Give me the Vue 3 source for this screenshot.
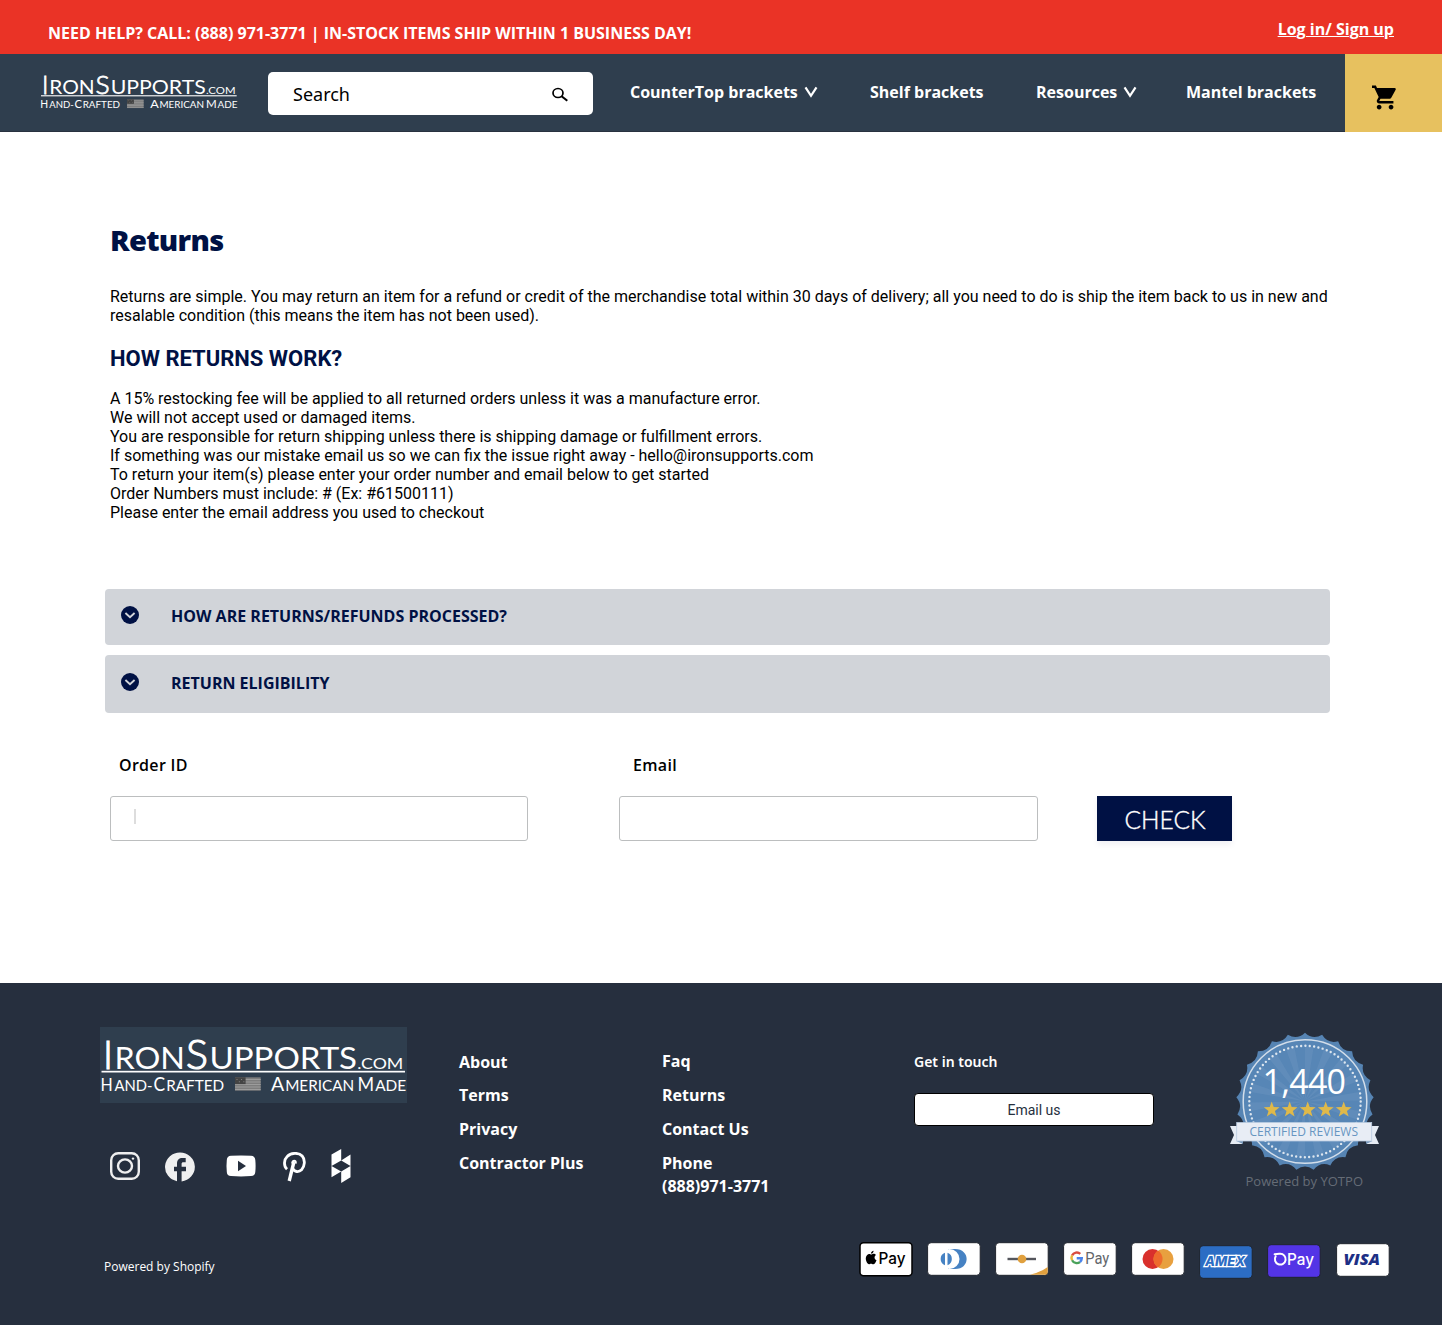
<script setup>
import { h } from 'vue'

const navItems = [
  { label: 'CounterTop brackets', menu: true },
  { label: 'Shelf brackets', menu: false },
  { label: 'Resources', menu: true },
  { label: 'Mantel brackets', menu: false },
]

const steps = [
  'A 15% restocking fee will be applied to all returned orders unless it was a manufacture error.',
  'We will not accept used or damaged items.',
  'You are responsible for return shipping unless there is shipping damage or fulfillment errors.',
  'If something was our mistake email us so we can fix the issue right away - hello@ironsupports.com',
  'To return your item(s) please enter your order number and email below to get started',
  'Order Numbers must include: # (Ex: #61500111)',
  'Please enter the email address you used to checkout',
]

// Wordmark pieces: text, x, baseline, font size, width, weight
const wordmark = [
  ['I', 2.9, 42.3, 40, 10, 300],
  ['RON', 14.4, 42.3, 30.5, 70.5, 400],
  ['S', 86, 42.3, 41, 22, 300],
  ['UPPORTS', 109.5, 42.3, 30.5, 147.5, 400],
  ['.COM', 257.3, 42.3, 16, 46, 400],
  ['H', 0.4, 64, 18, 12.2, 400],
  ['AND-', 14.4, 64, 14.6, 38, 400],
  ['C', 53.6, 64, 18.5, 11.6, 400],
  ['RAFTED', 66.2, 64, 14.6, 58, 400],
  ['A', 171, 64, 18.5, 13.2, 400],
  ['MERICAN', 185.2, 64, 14.6, 69, 400],
  ['M', 257.5, 64, 18.5, 16.6, 400],
  ['ADE', 275.2, 64, 14.6, 31, 400],
]

const Wordmark = () =>
  h('svg', { viewBox: '0 0 307 76', fill: '#fff', 'font-family': 'Lato, sans-serif' }, [
    ...wordmark.map(([t, x, y, size, textLength, weight]) =>
      h(
        'text',
        {
          x,
          y,
          'font-size': size,
          textLength,
          lengthAdjust: 'spacingAndGlyphs',
          'font-weight': weight,
          ...(weight === 300 ? { stroke: '#fff', 'stroke-width': 1.2 } : {}),
        },
        t
      )
    ),
    h('rect', { x: 1.5, y: 43.8, width: 303.5, height: 1.7 }),
    h('rect', { x: 135, y: 50.3, width: 25.7, height: 13.4, fill: '#7d7d7d' }),
    ...[0, 1, 2, 3, 4].map((i) =>
      h('rect', { x: 135, y: 52 + i * 2.5, width: 25.7, height: 1, fill: '#9c9c9c' })
    ),
    h('rect', { x: 135, y: 50.3, width: 10.6, height: 6.8, fill: '#444' }),
    ...[0, 1, 2, 3].map((i) =>
      h('circle', { cx: 137 + i * 2.3, cy: 52.4 + (i % 2) * 2.4, r: 0.5, fill: '#999' })
    ),
  ])

// Seal outline: 25 points joined by shallow inward arcs
const polar = (r, deg) => {
  const a = ((deg - 90) * Math.PI) / 180
  return `${(80 + r * Math.cos(a)).toFixed(2)} ${(73.5 + r * Math.sin(a)).toFixed(2)}`
}
const points = 25
const stepDeg = 360 / points
let seal = `M${polar(68.8, 0)}`
for (let i = 0; i < points; i++) {
  seal += `Q${polar(61.8, (i + 0.5) * stepDeg)} ${polar(68.8, (i + 1) * stepDeg)}`
}
seal += 'Z'
const rays = Array.from({ length: 18 }, (_, i) => `M80 73.5L${polar(55, i * 20)}L${polar(55, i * 20 + 9)}Z`).join('')
const stars = [46.7, 64.7, 82.7, 100.7, 118.7]
</script>

<template>
  <div class="page">
    <div class="promo">
      <span>NEED HELP? CALL: (888) 971-3771 | IN-STOCK ITEMS SHIP WITHIN 1 BUSINESS DAY!</span>
      <a class="login">Log in/ Sign up</a>
    </div>

    <header class="bar">
      <Wordmark class="logo" />
      <div class="search">
        <span>Search</span>
        <svg width="18" height="16" viewBox="0 0 18 16" fill="none" stroke="#000">
          <ellipse cx="7" cy="6" rx="5" ry="4.5" stroke-width="1.7" />
          <path d="M10.6 9.3L16.3 13.8" stroke-width="2.1" />
        </svg>
      </div>
      <nav class="nav">
        <a v-for="n in navItems" :key="n.label">
          {{ n.label }}
          <svg v-if="n.menu" width="14" height="12" viewBox="0 0 14 12" fill="none" stroke="#fff" stroke-width="2.2">
            <path d="M1.5 1.3L7 9.8L12.5 1.3" />
          </svg>
        </a>
      </nav>
      <div class="cart">
        <svg width="25" height="25" viewBox="1 2 21 20">
          <path d="M7 18c-1.1 0-1.99.9-1.99 2S5.9 22 7 22s2-.9 2-2-.9-2-2-2zM1 2v2h2l3.6 7.59-1.35 2.45c-.16.28-.25.61-.25.96 0 1.1.9 2 2 2h12v-2H7.42c-.14 0-.25-.11-.25-.25l.03-.12.9-1.63h7.45c.75 0 1.41-.41 1.75-1.03l3.58-6.49A1 1 0 0 0 20.01 4H5.21l-.94-2H1zm16 16c-1.1 0-1.99.9-1.99 2s.89 2 1.99 2 2-.9 2-2-.9-2-2-2z" />
        </svg>
      </div>
    </header>

    <main class="content">
      <h1>Returns</h1>
      <p class="intro">
        Returns are simple. You may return an item for a refund or credit of the merchandise total within 30 days of delivery; all you need to do is ship the item back to us in new and<br />resalable condition (this means the item has not been used).
      </p>
      <h2>HOW RETURNS WORK?</h2>
      <p class="steps"><span v-for="s in steps" :key="s">{{ s }}</span></p>

      <section class="accordions">
        <div v-for="(t, i) in ['HOW ARE RETURNS/REFUNDS PROCESSED?', 'RETURN ELIGIBILITY']" :key="t" class="accordion" :class="{ tall: i === 1 }">
          <svg width="18" height="18" viewBox="0 0 18 18">
            <circle cx="9" cy="9" r="9" fill="#001144" />
            <path d="M4.4 7L9 11.2L13.6 7" fill="none" stroke="#d1d4d9" stroke-width="1.9" />
          </svg>
          <span>{{ t }}</span>
        </div>
      </section>

      <form class="lookup" @submit.prevent>
        <label class="order"><span>Order ID</span><div class="field"><i></i></div></label>
        <label class="email"><span>Email</span><div class="field"></div></label>
        <button>CHECK</button>
      </form>
    </main>

    <footer class="footer">
      <div class="top">
        <div class="brand">
          <div class="plate"><Wordmark /></div>
          <div class="social">
            <svg width="30" height="28" viewBox="0 0 30 28" fill="none" stroke="#efefef">
              <rect x="1.2" y="1.2" width="27.6" height="25.6" rx="7" stroke-width="2.4" />
              <ellipse cx="15" cy="14" rx="7" ry="6.6" stroke-width="2.4" />
              <circle cx="23" cy="6.6" r="1.2" fill="#efefef" stroke="none" />
            </svg>
            <svg class="fb" width="30" height="30" viewBox="0 0 30 30">
              <path fill="#efefef" d="M15 .5A15 14.5 0 0 0 12 29.2V19.2H9V14.8H12V12C12 7.8 14 6 17.5 6H20.7V10.2H18.5C17 10.2 16.6 10.8 16.6 12V14.8H21V19.2H16.6V29.4A15 14.5 0 0 0 15 .5Z" />
            </svg>
            <svg class="yt" width="30" height="22" viewBox="0 0 30 22">
              <path fill="#fff" fill-rule="evenodd" d="M5 .8Q15 0 25 .8Q29 1 29.3 5Q29.9 11 29.3 17Q29 20.8 25 21.1Q15 21.7 5 21.1Q1 20.8.8 17Q.2 11 .8 5Q1 1 5 .8ZM12 5.8V16.3L20 11Z" />
            </svg>
            <svg class="pin" width="23" height="30" viewBox="0 0 23 30" fill="none" stroke="#fff">
              <path d="M4 17.2C.5 14 .8 7.7 4.2 4.5C8 .4 16 .4 19.2 4C22.6 7.8 21.6 14.8 18.6 17.8C15.8 20.5 11.3 20 10.1 16.8" stroke-width="2.8" />
              <path d="M10.9 10L6.2 29" stroke-width="3.4" />
              <path d="M9.3 11.5C9.2 7.8 13.4 7.8 12.6 11.5" stroke-width="2.2" />
            </svg>
            <svg class="houzz" width="20" height="34" viewBox="0 0 20 34" fill="#fff">
              <path d="M.5 5.6L10.2 0V11.5L.5 17ZM19.5 5.6V17L10.2 11.5ZM.5 17L10.2 22.6L.5 28.3ZM19.5 17V28.3L10.2 34V22.6Z" />
            </svg>
          </div>
        </div>

        <ul class="links">
          <li>About</li><li>Terms</li><li>Privacy</li><li>Contractor Plus</li>
        </ul>
        <ul class="links second">
          <li>Faq</li><li>Returns</li><li>Contact Us</li><li>Phone</li><li class="tel">(888)971-3771</li>
        </ul>

        <div class="touch">
          <h3>Get in touch</h3>
          <button>Email us</button>
        </div>

        <svg class="seal" width="160" height="168" viewBox="0 0 160 168">
          <path :d="seal" fill="#5684b3" />
          <circle cx="80" cy="73.5" r="61.8" fill="#5786b6" stroke="#d3deea" stroke-width="1.5" />
          <path :d="rays" fill="#6d97c0" opacity=".4" />
          <circle cx="80" cy="73.5" r="55.7" fill="none" stroke="#dde6ef" stroke-width="2.4" stroke-linecap="round" stroke-dasharray="0 4.375" />
          <text x="37.5" y="66" font-size="34" fill="#fff" textLength="83.5">1,440</text>
          <path v-for="x in stars" :key="x" :transform="`translate(${x} 81.8)`" fill="#dfb94a" d="M0-8.3L2-2.7L7.9-2.5L3.2 1.1L4.9 6.8L0 3.5L-4.9 6.8L-3.2 1.1L-7.9-2.5L-2-2.7Z" />
          <path d="M5 98H17V116H5L9 107ZM154 98H142V116H154L150 107Z" fill="#e6ecf4" />
          <path d="M11.5 113L18 116V113ZM147.5 113L141 116V113Z" fill="#7898ba" />
          <rect x="11.7" y="94.5" width="135" height="18.5" fill="#e8edf5" stroke="#b9cbe0" stroke-width=".8" />
          <text x="24.5" y="107.8" font-size="12.5" fill="#6795c1" textLength="108.5" lengthAdjust="spacingAndGlyphs">CERTIFIED REVIEWS</text>
          <text x="20.5" y="158" font-size="13" fill="#656c76" textLength="117.5">Powered by YOTPO</text>
        </svg>
      </div>

      <div class="bottom">
        <span>Powered by Shopify</span>
        <div class="cards">
          <svg class="apple" viewBox="0 0 54 35">
            <rect x="1" y=".8" width="52" height="33" rx="3.5" fill="#fff" stroke="#000" stroke-width="1.5" />
            <path d="M12.6 12.4C14 11.4 16 11.6 17 13C14.9 14.3 15.2 17.2 17.5 18.2C17 20 15.5 22.3 14.2 22.2C13.2 22.1 12.9 21.7 12 21.7S10.7 22.2 10 22.2C8.3 22.2 6.6 18.6 6.8 16C7 13 9.5 11.2 11.4 12.2C12 12.5 12.1 12.6 12.6 12.4ZM11.9 11.6C11.9 10 13.3 8.8 14.6 8.7C14.7 10.3 13.5 11.7 11.9 11.6Z" />
            <text x="19.5" y="22.2" font-size="16" font-weight="500" font-family="Inter, sans-serif" textLength="27" lengthAdjust="spacingAndGlyphs">Pay</text>
          </svg>
          <svg viewBox="0 0 54 34">
            <rect class="card" x=".6" y=".7" width="52.6" height="32.6" rx="3.5" />
            <path fill="#4682c3" d="M21 7H28C43.5 7 43.5 27 28 27H21Z" />
            <circle cx="22.5" cy="17" r="10" fill="#fff" />
            <path fill="#4682c3" d="M18 10.8A6.6 6.6 0 0 0 18 23.2ZM20.5 10.8A6.6 6.6 0 0 1 20.5 23.2Z" />
          </svg>
          <svg viewBox="0 0 54 34">
            <rect class="card" x=".6" y=".7" width="52.6" height="32.6" rx="3.5" />
            <rect x="12.5" y="15.8" width="28.5" height="2.4" fill="#54565c" />
            <circle cx="27" cy="17" r="4.3" fill="#e0a03e" />
            <path d="M35 32.7Q46 30 52.7 25V30Q52.7 32.7 50 32.7Z" fill="#e0a03e" />
          </svg>
          <svg viewBox="0 0 54 34">
            <rect class="card" x=".6" y=".7" width="52.6" height="32.6" rx="3.5" />
            <g fill="none" stroke-width="2.4">
              <path d="M17.3 11.8A5.3 5.3 0 0 0 9.1 13.4" stroke="#d94b3f" />
              <path d="M9.1 13.4A5.3 5.3 0 0 0 9.1 18.2" stroke="#e9b83b" />
              <path d="M9.1 18.2A5.3 5.3 0 0 0 17 20" stroke="#4aa25a" />
              <path d="M17 20A5.3 5.3 0 0 0 18.8 16.2H13.7" stroke="#4a83eb" />
            </g>
            <text x="22.3" y="21.7" font-size="16" fill="#63666b" font-family="Roboto, sans-serif" textLength="24" lengthAdjust="spacingAndGlyphs">Pay</text>
          </svg>
          <svg viewBox="0 0 54 34">
            <rect class="card" x=".6" y=".7" width="52.6" height="32.6" rx="3.5" />
            <circle cx="21.5" cy="17" r="10" fill="#d9302c" />
            <circle cx="32.5" cy="17" r="10" fill="#e8a03f" />
            <path d="M27 8.6A10 10 0 0 1 27 25.4A10 10 0 0 1 27 8.6Z" fill="#ee6a2c" />
          </svg>
          <svg class="down3" viewBox="0 0 54 34">
            <rect class="card amex" x=".6" y=".7" width="52.6" height="32.6" rx="3.5" />
            <text x="6" y="20.9" font-size="12.5" font-style="italic" font-weight="800" fill="#2c6dc4" stroke="#fff" stroke-width="2.4" paint-order="stroke" font-family="Inter, sans-serif" textLength="40" lengthAdjust="spacingAndGlyphs">AMEX</text>
          </svg>
          <svg class="down2" viewBox="0 0 54 34">
            <rect class="card shop" x=".6" y=".7" width="52.6" height="32.6" rx="3.5" />
            <path d="M8.7 12.3A5.4 5.4 0 1 0 13 9.8Q10.4 9.7 7.6 10.3" fill="none" stroke="#fff" stroke-width="2" stroke-linecap="round" />
            <text x="20" y="20.7" font-size="16" fill="#fff" font-weight="500" font-family="Inter, sans-serif" textLength="27" lengthAdjust="spacingAndGlyphs">Pay</text>
          </svg>
          <svg class="down1" viewBox="0 0 54 34">
            <rect class="card" x=".6" y=".7" width="52.6" height="32.6" rx="3.5" />
            <text x="7.5" y="22" font-size="15.5" font-style="italic" font-weight="800" fill="#1d2f85" font-family="'Open Sans', sans-serif" textLength="36.5" lengthAdjust="spacingAndGlyphs">VISA</text>
          </svg>
        </div>
      </div>
    </footer>
  </div>
</template>

<style>
body {
  margin: 0;
}
</style>

<style scoped>
.page {
  width: 1442px;
  height: 1325px;
  overflow: hidden;
  display: flex;
  flex-direction: column;
  background: #fff;
  color: #000;
  font-family: 'Open Sans', sans-serif;
}
svg {
  display: block;
  flex: none;
}
.promo {
  height: 54px;
  box-sizing: border-box;
  padding: 18px 48px 0;
  display: flex;
  justify-content: space-between;
  align-items: flex-start;
  background: #ea3326;
  color: #fff;
  font-size: 16px;
  font-weight: 700;
  line-height: 22px;
  white-space: nowrap;
}
.promo span {
  padding-top: 4px;
}
.login {
  text-decoration: underline;
  text-decoration-thickness: 1px;
}
.bar {
  height: 78px;
  display: flex;
  background: #2f3e4e;
  box-shadow: inset 0 -1px #28313f;
}
.logo {
  width: 198px;
  height: 49px;
  margin: 13px 30px 0 40px;
}
.search {
  width: 325px;
  height: 43px;
  margin-top: 18px;
  box-sizing: border-box;
  padding: 0 24px 0 25px;
  display: flex;
  align-items: center;
  justify-content: space-between;
  background: #fff;
  border-radius: 5px;
  font-family: 'Noto Sans', sans-serif;
  font-size: 18px;
}
.search svg {
  margin-top: 2px;
}
.nav {
  margin-left: 37px;
  display: grid;
  grid-template-columns: 240px 166px 150px 159px;
  height: 76px;
  color: #fff;
  font-size: 16px;
  font-weight: 700;
  white-space: nowrap;
}
.nav a {
  display: flex;
  align-items: center;
  gap: 6px;
}
.cart {
  width: 97px;
  display: flex;
  align-items: center;
  justify-content: center;
  background: #e7c15f;
}
.cart svg {
  margin: 9px 18px 0 0;
}
.content {
  height: 851px;
  box-sizing: border-box;
  padding: 89px 105px 0;
}
h1 {
  margin: 0 0 0 5px;
  font-size: 29px;
  line-height: 38px;
  font-weight: 800;
  letter-spacing: -0.7px;
  color: #001144;
}
.intro,
.steps {
  margin: 28px 0 0 5px;
  font: 16px/19px Roboto, sans-serif;
  white-space: nowrap;
}
h2 {
  margin: 20px 0 0 5px;
  font: 700 22px/28px Roboto, sans-serif;
  color: #001144;
}
.steps {
  margin-top: 16px;
  display: flex;
  flex-direction: column;
}
.accordions {
  margin-top: 67px;
  width: 1225px;
  display: flex;
  flex-direction: column;
  gap: 10px;
}
.accordion {
  height: 56px;
  box-sizing: border-box;
  padding: 0 16px 2px;
  display: flex;
  align-items: center;
  gap: 32px;
  background: #d1d4d9;
  border-radius: 4px;
  color: #001144;
  font-size: 16px;
  font-weight: 700;
}
.accordion svg {
  margin-top: -2px;
}
.tall {
  height: 58px;
}
.lookup {
  margin: 40px 0 0 5px;
  display: flex;
  align-items: flex-end;
}
.lookup label {
  width: 418px;
  font-size: 16px;
  font-weight: 600;
  letter-spacing: 0.3px;
}
.lookup label > span {
  display: block;
  margin-left: 9px;
  height: 43px;
  line-height: 24px;
}
.lookup .email {
  width: 419px;
  margin: 0 59px 0 91px;
}
.lookup .email > span {
  margin-left: 14px;
}
.field {
  height: 45px;
  box-sizing: border-box;
  border: 1px solid #bcbebf;
  border-radius: 3px;
  padding: 12px 23px;
}
.field i {
  display: block;
  width: 2px;
  height: 15px;
  background: #ddd;
}
.lookup button {
  width: 135px;
  height: 45px;
  border: 0;
  padding: 1px 0 0 1px;
  background: #001144;
  color: #fff;
  font: 300 24.5px Lato, sans-serif;
  -webkit-text-stroke: 0.4px #fff;
  box-shadow: 0 4px 6px rgba(0, 17, 68, 0.06);
}
.footer {
  height: 342px;
  background: #262f3e;
  color: #fff;
}
.top {
  height: 248px;
  box-sizing: border-box;
  padding: 44px 0 0 100px;
  display: flex;
}
.brand {
  width: 359px;
}
.plate {
  width: 307px;
  height: 76px;
  background: #2f3e4e;
}
.social {
  margin: 46px 0 0 10px;
  display: flex;
  align-items: center;
  height: 34px;
}
.fb {
  margin: 1px 0 0 25px;
}
.yt {
  margin-left: 31px;
}
.pin {
  margin: 2px 0 0 27px;
}
.houzz {
  margin-left: 24.5px;
}
.links {
  width: 203px;
  margin: 18px 0 0;
  padding: 0;
  list-style: none;
  font-size: 16px;
  font-weight: 700;
  line-height: 34px;
}
.links li:first-child {
  height: 33px;
}
.second {
  width: 252px;
}
.second li:first-child {
  line-height: 32px;
}
.tel {
  margin-top: -11px;
}
.touch {
  width: 311px;
}
.touch h3 {
  margin: 25px 0 0;
  font: 600 14px/20px 'Noto Sans', sans-serif;
}
.touch button {
  display: block;
  width: 240px;
  height: 33px;
  margin-top: 21px;
  border: 1px solid #000;
  border-radius: 4px;
  background: #fff;
  color: #262f3e;
  font: 14px Roboto, sans-serif;
}
.seal {
  margin-top: 1px;
}
.bottom {
  display: flex;
  justify-content: space-between;
  padding: 11px 52.5px 0 104px;
  font-size: 12px;
}
.bottom > span {
  margin-top: 16px;
  line-height: 18px;
}
.cards {
  display: flex;
  gap: 14.1px;
  align-items: flex-start;
}
.cards svg {
  width: 54px;
  height: 34px;
}
.cards .apple {
  height: 35px;
}
.card {
  fill: #fff;
  stroke: #20252e;
  stroke-width: 1px;
}
.amex {
  fill: #2c6dc4;
}
.shop {
  fill: #5334e6;
}
.cards .down3 {
  margin-top: 3px;
}
.cards .down2 {
  margin-top: 2px;
}
.cards .down1 {
  margin-top: 1px;
}
</style>
